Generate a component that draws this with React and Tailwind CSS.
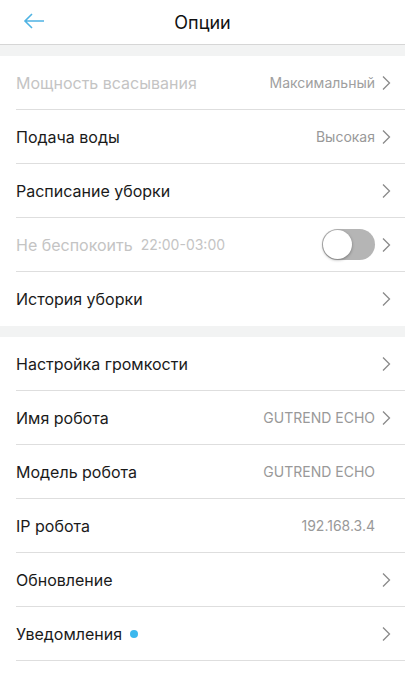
const Chevron = () => (
  <svg width="10" height="16" viewBox="0 0 10 16" className="shrink-0">
    <path d="M2 1.5 L8.5 8 L2 14.5" fill="none" stroke="#8a8a8a" strokeWidth="1.3" />
  </svg>
);

const Row = ({ label, value, disabled, chevron = true, extra, children }) => (
  <div className="pl-4">
    <div className="flex items-center h-[54px] pr-[14px] border-b border-[#dedede]">
      <div className="flex items-center flex-1 min-w-0">
        <span className={`text-[16px] ${disabled ? "text-[#c4c4c4]" : "text-[#1a1a1a]"}`}>
          {label}
        </span>
        {extra}
      </div>
      {value && (
        <span className={`text-[14px] mr-[6px] ${disabled ? "text-[#a0a0a0]" : "text-[#999999]"}`}>
          {value}
        </span>
      )}
      {children}
      {chevron ? <Chevron /> : <div className="w-[10px]" />}
    </div>
  </div>
);

const Toggle = () => (
  <div className="relative w-[53px] h-[31px] rounded-full bg-[#b5b5b5] mr-[6px]">
    <div className="absolute left-[1px] top-[1px] w-[29px] h-[29px] rounded-full bg-white shadow-[0_1px_3px_rgba(0,0,0,0.35)]" />
  </div>
);

export default function App() {
  return (
    <div className="w-[405px] h-[674px] bg-white overflow-hidden" style={{ fontFamily: "Inter, 'Noto Sans', sans-serif" }}>
      <div className="relative flex items-center justify-center h-[45px] border-b border-[#d6d6d6]">
        <svg width="24" height="18" viewBox="0 0 24 18" className="absolute left-[22px] top-[12px]">
          <path d="M22 9 H3 M10 2 L3 9 L10 16" fill="none" stroke="#4fb3e3" strokeWidth="1.6" />
        </svg>
        <span className="text-[18px] text-[#111]">Опции</span>
      </div>
      <div className="h-[11px] bg-[#f2f3f3]" />
      <Row label="Мощность всасывания" value="Максимальный" disabled />
      <Row label="Подача воды" value="Высокая" />
      <Row label="Расписание уборки" />
      <Row
        label="Не беспокоить"
        disabled
        extra={<span className="ml-2 text-[14px] text-[#c4c4c4]">22:00-03:00</span>}
      >
        <Toggle />
      </Row>
      <div className="pl-4">
        <div className="flex items-center h-[54px] pr-[14px]">
          <span className="flex-1 text-[16px] text-[#1a1a1a]">История уборки</span>
          <Chevron />
        </div>
      </div>
      <div className="h-[11px] bg-[#f2f3f3]" />
      <Row label="Настройка громкости" />
      <Row label="Имя робота" value="GUTREND ECHO" />
      <Row label="Модель робота" value="GUTREND ECHO" chevron={false} />
      <Row label="IP робота" value="192.168.3.4" chevron={false} />
      <Row label="Обновление" />
      <Row
        label="Уведомления"
        extra={<span className="ml-2 w-[8px] h-[8px] rounded-full bg-[#3bb8ee]" />}
      />
    </div>
  );
}
